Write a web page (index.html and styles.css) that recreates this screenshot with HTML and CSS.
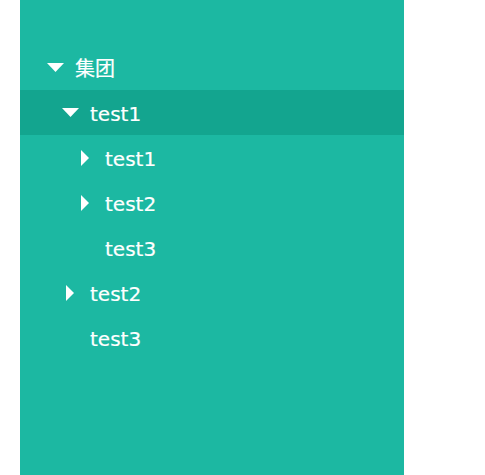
FILE: index.html
```html
<!DOCTYPE html>
<html>
<head>
<meta charset="utf-8">
<link rel="stylesheet" href="styles.css">
</head>
<body>
<div class="panel">
  <ul class="tree">
    <li class="row lvl0"><span class="arrow"><svg width="17" height="9" viewBox="0 0 17 9"><polygon points="0,0 17,0 8.5,9" fill="#fff"/></svg></span><span class="label">集团</span></li>
    <li class="row lvl1 active"><span class="arrow"><svg width="17" height="9" viewBox="0 0 17 9"><polygon points="0,0 17,0 8.5,9" fill="#fff"/></svg></span><span class="label">test1</span></li>
    <li class="row lvl2"><span class="arrow"><svg width="10" height="16" viewBox="0 0 10 16"><polygon points="1,0 9,8 1,16" fill="#fff"/></svg></span><span class="label">test1</span></li>
    <li class="row lvl2"><span class="arrow"><svg width="10" height="16" viewBox="0 0 10 16"><polygon points="1,0 9,8 1,16" fill="#fff"/></svg></span><span class="label">test2</span></li>
    <li class="row lvl2"><span class="arrow"></span><span class="label">test3</span></li>
    <li class="row lvl1"><span class="arrow"><svg width="10" height="16" viewBox="0 0 10 16"><polygon points="1,0 9,8 1,16" fill="#fff"/></svg></span><span class="label">test2</span></li>
    <li class="row lvl1"><span class="arrow"></span><span class="label">test3</span></li>
  </ul>
</div>
</body>
</html>
```

FILE: styles.css
```css
html, body {
  margin: 0;
  padding: 0;
  background: #ffffff;
  height: 100%;
}
body {
  padding-left: 20px;
  box-sizing: border-box;
  font-family: "DejaVu Sans", "Noto Sans CJK SC", sans-serif;
}
.panel {
  width: 384px;
  height: 475px;
  background: #1cb8a2;
  padding-top: 45px;
  box-sizing: border-box;
}
.tree {
  list-style: none;
  margin: 0;
  padding: 0;
}
.row {
  height: 45px;
  display: flex;
  align-items: center;
  color: #ffffff;
  font-size: 20px;
}
.row.active {
  background: #13a58f;
}
.lvl0 { padding-left: 25px; }
.lvl1 { padding-left: 40px; }
.lvl2 { padding-left: 55px; }
.arrow {
  width: 20px;
  display: flex;
  justify-content: center;
  align-items: center;
  margin-right: 10px;
}
.arrow svg { display: block; }
.label {
  line-height: 41px;
  padding-top: 4px;
  -webkit-text-stroke: 0.2px #ffffff;
}
```
